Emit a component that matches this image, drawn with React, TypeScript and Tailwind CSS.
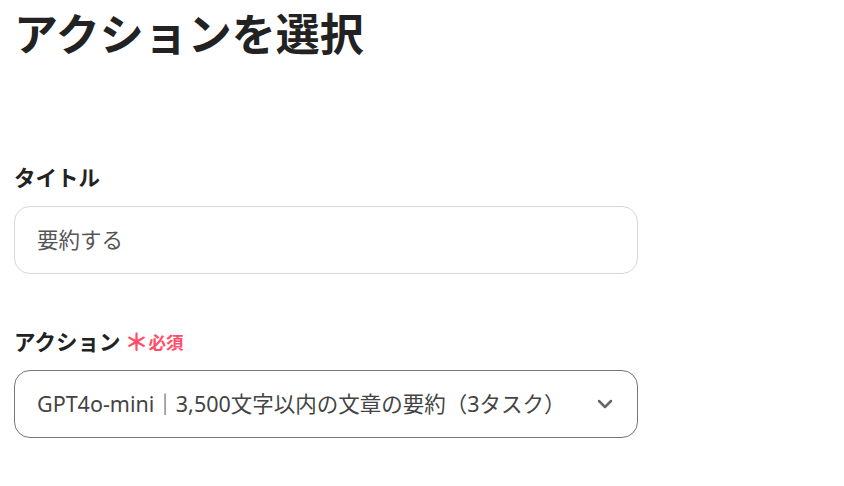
import { ChevronDown } from 'lucide-react';

const font = { fontFamily: '"Noto Sans", "Noto Sans CJK JP", sans-serif' };

const App = () => {
  return (
    <div className="min-h-[486px] w-[844px] bg-white px-[14px] text-[#222]" style={font}>
      <h1 className="text-[44px] font-bold leading-[68px]">アクションを選択</h1>

      <div className="mt-[95px]">
        <label className="block text-[21.5px] font-bold leading-[30px]">タイトル</label>
        <div className="mt-[13px] flex h-[68px] w-[624px] items-center rounded-2xl border border-[#d4d7dc] px-[22px] text-[21.5px] text-[#555]">
          要約する
        </div>
      </div>

      <div className="mt-[53px]">
        <label className="flex items-center text-[21.5px] font-bold leading-[30px]">
          アクション
          <span className="ml-[4px] text-[24px] text-[#ff4d6a]">＊</span>
          <span className="text-[17.5px] text-[#ff4d6a]">必須</span>
        </label>
        <div className="mt-[13px] flex h-[68px] w-[624px] items-center justify-between rounded-2xl border border-[#777] pl-[22px] pr-[20px] text-[21.5px] text-[#444]">
          <span>GPT4o-mini｜3,500文字以内の文章の要約（3タスク）</span>
          <ChevronDown className="h-6 w-6 text-[#666]" strokeWidth={2.5} />
        </div>
      </div>
    </div>
  );
};

export default App;
